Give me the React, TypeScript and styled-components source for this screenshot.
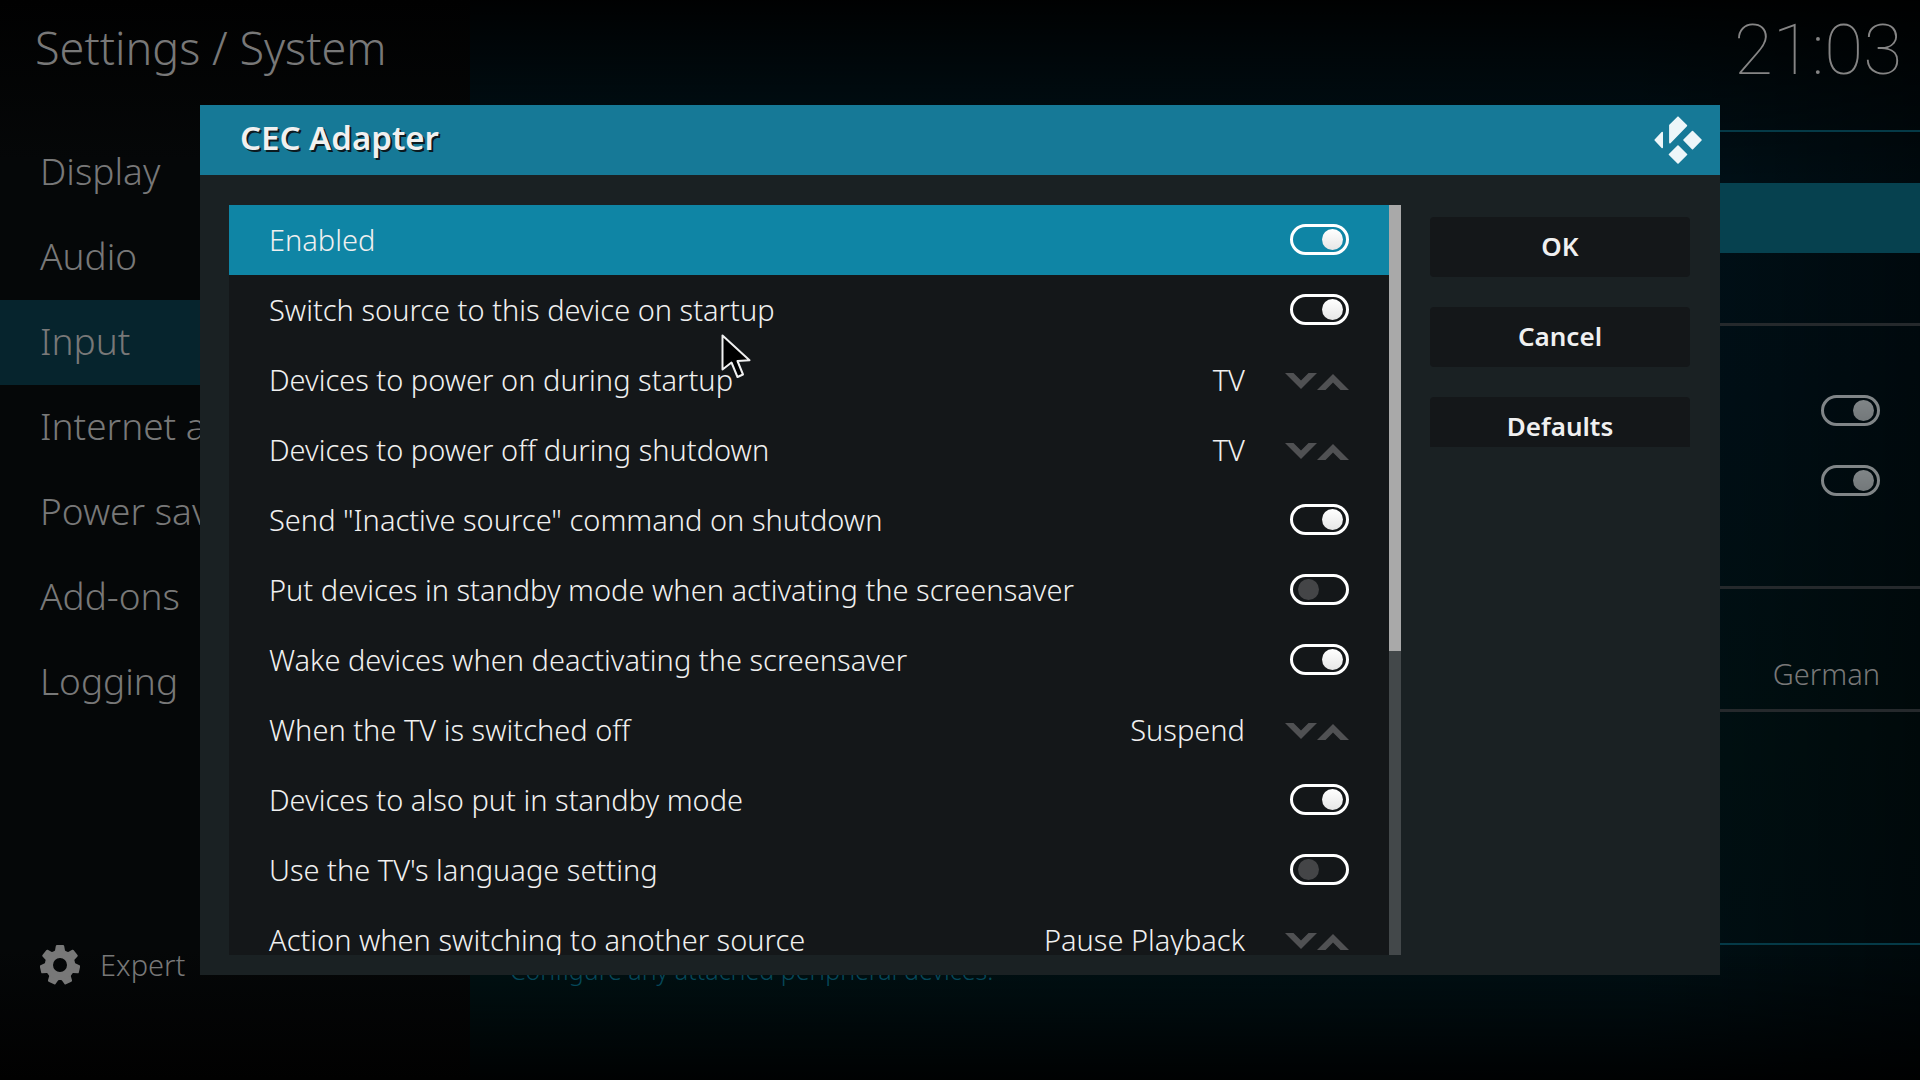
import React, { useState } from "react";
import styled, { createGlobalStyle, css } from "styled-components";

const GlobalStyle = createGlobalStyle`
  *, *::before, *::after { box-sizing: border-box; }
  html, body, #root { height: 100%; }
  body {
    margin: 0;
    overflow: hidden;
    background: #000;
    color: #f0f0f0;
    font-family: "Noto Sans", "Open Sans", sans-serif;
    font-weight: 300;
  }
  button { font: inherit; color: inherit; border: 0; padding: 0; background: none; cursor: inherit; }
  button:focus-visible, input:focus-visible { outline: 2px solid #12b2e7; outline-offset: 2px; }
`;

/* ---------- Window behind the dialog ---------- */

const Screen = styled.div`
  position: relative;
  display: flex;
  height: 100vh;
  color: #787878;
  background:
    linear-gradient(to bottom, rgba(0, 0, 0, 0.95) 0, rgba(0, 0, 0, 0) 180px, rgba(0, 0, 0, 0) calc(100% - 130px), rgba(0, 0, 0, 0.9) 100%),
    linear-gradient(to right, rgba(0, 0, 0, 0) 85%, rgba(0, 0, 0, 0.5) 100%),
    linear-gradient(170deg, #00141c 0%, #001119 50%, #001214 75%, #000f16 100%);
`;

const Sidebar = styled.nav`
  display: flex;
  flex-direction: column;
  flex: none;
  width: 470px;
  padding-bottom: 80px;
  background: linear-gradient(to bottom, #010101 0, #050708 160px, #050708 calc(100% - 130px), #010101 100%);
`;

const WindowTitle = styled.h1`
  height: 130px;
  margin: 0;
  padding: 17px 35px 0;
  font-size: 45px;
  line-height: 62px;
  font-weight: 300;
  white-space: nowrap;
`;

const Menu = styled.ul`
  flex: 1;
  margin: 0;
  padding: 0;
  list-style: none;
`;

const MenuLink = styled.a<{ $current: boolean }>`
  display: block;
  padding: 0 40px 4px;
  font-size: 37px;
  line-height: 81px;
  color: inherit;
  text-decoration: none;
  white-space: nowrap;
  background: ${(p) => (p.$current ? "#06242d" : "transparent")};
`;

const LevelButton = styled.button`
  display: flex;
  align-items: center;
  gap: 20px;
  height: 70px;
  padding: 0 40px;
  font-size: 29px;
`;

const Caption = styled.span`
  padding-bottom: 2px;
`;

const Content = styled.main`
  display: flex;
  flex-direction: column;
  flex: 1;
  min-width: 0;
`;

const ContentHeader = styled.header`
  display: flex;
  justify-content: flex-end;
  height: 130px;
  padding: 8px 18px 0;
`;

const Clock = styled.time`
  font-family: "Roboto Thin", Roboto, sans-serif;
  font-weight: 100;
  font-size: 71px;
  line-height: 84px;
  color: #858585;
`;

const Groups = styled.div`
  flex: 1;
  padding-top: 51px;
  border-top: 2px solid #053a47;
  border-bottom: 2px solid #053a47;
`;

const Group = styled.section<{ $heading: boolean }>`
  padding-top: ${(p) => (p.$heading ? "50px" : "0")};
  border-bottom: 3px solid #25292c;
`;

const GroupRow = styled.div<{ $focused?: boolean }>`
  display: flex;
  align-items: center;
  justify-content: flex-end;
  height: 70px;
  padding: 0 40px;
  font-size: 29px;
  background: ${(p) => (p.$focused ? "#06414f" : "transparent")};
`;

const Description = styled.p`
  height: 135px;
  margin: 0;
  padding: 7px 40px 0;
  font-size: 25px;
  line-height: 36px;
  color: #06485a;
`;

/* ---------- Dialog ---------- */

const Overlay = styled.div`
  position: absolute;
  inset: 0;
  display: flex;
  padding: 105px 200px;
`;

const Dialog = styled.section`
  display: flex;
  flex-direction: column;
  flex: 1;
  min-width: 0;
  color: #f0f0f0;
  background: #1a2123;
`;

const DialogHeader = styled.header`
  display: flex;
  align-items: center;
  justify-content: space-between;
  flex: none;
  height: 70px;
  padding: 0 18px 0 40px;
  background: #167997;
`;

const DialogTitle = styled.h2`
  height: 70px;
  margin: 0;
  font-size: 33px;
  line-height: 66px;
  font-weight: 600;
  text-shadow: 2px 2px 0 #0b1a20;
`;

const DialogBody = styled.div`
  display: flex;
  flex: 1;
  min-height: 0;
  padding: 30px 30px 20px 29px;
`;

const List = styled.div`
  flex: 1;
  min-width: 0;
  overflow: hidden;
  background: #141719;
`;

const Row = styled.div<{ $focused: boolean }>`
  display: flex;
  align-items: center;
  height: 70px;
  padding: 0 40px;
  font-size: 29px;
  line-height: 70px;
  white-space: nowrap;
  background: ${(p) => (p.$focused ? "#0f85a5" : "transparent")};
`;

const RowLabel = styled.label`
  flex: 1;
`;

const Value = styled.output`
  margin-right: 40px;
`;

const Spinner = styled.div`
  display: flex;
  margin-top: 2px;
  color: #505153;
`;

const SpinButton = styled.button`
  display: flex;
  width: 32px;
`;

const Toggle = styled.input.attrs({ type: "checkbox", role: "switch" })<{ $dim?: boolean }>`
  appearance: none;
  display: flex;
  align-items: center;
  flex: none;
  width: 59px;
  height: 31px;
  margin: 0 0 2px;
  padding: 0 3px;
  border: 3px solid #fff;
  border-radius: 16px;

  &::before {
    content: "";
    width: 21px;
    height: 21px;
    margin-left: 2px;
    border-radius: 50%;
    background: #444547;
  }

  &:checked::before {
    margin-left: 26px;
    background: linear-gradient(#fff, #e6e6e6);
  }

  ${(p) =>
    p.$dim &&
    css`
      opacity: 0.5;
    `}
`;

const ScrollTrack = styled.div`
  flex: none;
  width: 12px;
  margin-right: 29px;
  background: #43484a;
`;

const ScrollThumb = styled.div`
  background: #a9a9a9;
`;

const Actions = styled.div`
  display: flex;
  flex-direction: column;
  gap: 30px;
  flex: none;
  width: 260px;
  max-height: 230px;
  margin-top: 12px;
  overflow: hidden;
`;

const ActionButton = styled.button`
  flex: none;
  height: 60px;
  padding-bottom: 3px;
  border-radius: 4px;
  background: #141719;
  font-size: 26px;
  font-weight: 600;
`;

const Pointer = styled.svg`
  position: absolute;
  left: 720px;
  top: 332px;
  pointer-events: none;
`;

/* ---------- Drawings ---------- */

const DownArrow = () => (
  <svg width="32" height="17" viewBox="0 0 32 17" aria-hidden="true">
    <path d="M0 0h8.500L16 7.500 23.500 0H32L16 16z" fill="currentColor" />
  </svg>
);

const UpArrow = () => (
  <svg width="32" height="17" viewBox="0 0 32 17" aria-hidden="true">
    <path d="M0 17h8.500L16 9.500l7.500 7.500H32L16 1z" fill="currentColor" />
  </svg>
);

const KodiLogo = () => (
  <svg width="48" height="48" viewBox="0 0 48 48" role="img" aria-label="Kodi">
    <g fill="#edf6f9" stroke="#edf6f9" strokeWidth="1.6" strokeLinejoin="round">
      <path d="M24 1.2 32.4 9.6 15.9 26.6V9.3z" />
      <path d="M1.2 24 8.2 16.6v14.8z" />
      <path d="M38.5 15.5 47 24l-8.5 8.7L30 24z" />
      <path d="M24 30l8.5 8.5L24 47l-8.5-8.5z" />
    </g>
  </svg>
);

const GearIcon = () => {
  const teeth = Array.from({ length: 7 }, (_, i) => (i * 360) / 7);
  return (
    <svg width="40" height="40" viewBox="0 0 40 40" fill="currentColor" aria-hidden="true">
      {teeth.map((angle) => (
        <path
          key={angle}
          d="M17 0h6q1 0 1.200 1l.800 4.500 2 1.500v3H13V7l2-1.500L15.800 1q.200-1 1.200-1z"
          transform={`rotate(${angle} 20 20)`}
        />
      ))}
      <path
        fillRule="evenodd"
        d="M20 5.500a14.500 14.500 0 1 0 0 29 14.500 14.500 0 0 0 0-29zm0 7.500a7 7 0 1 1 0 14 7 7 0 0 1 0-14z"
      />
    </svg>
  );
};

/* ---------- Data ---------- */

const MENU = ["Display", "Audio", "Input", "Internet access", "Power saving", "Add-ons", "Logging"];

type Setting =
  | { kind: "toggle"; label: string; on: boolean }
  | { kind: "spin"; label: string; options: string[] };

const SETTINGS: Setting[] = [
  { kind: "toggle", label: "Enabled", on: true },
  { kind: "toggle", label: "Switch source to this device on startup", on: true },
  { kind: "spin", label: "Devices to power on during startup", options: ["TV"] },
  { kind: "spin", label: "Devices to power off during shutdown", options: ["TV"] },
  { kind: "toggle", label: 'Send "Inactive source" command on shutdown', on: true },
  { kind: "toggle", label: "Put devices in standby mode when activating the screensaver", on: false },
  { kind: "toggle", label: "Wake devices when deactivating the screensaver", on: true },
  { kind: "spin", label: "When the TV is switched off", options: ["Suspend"] },
  { kind: "toggle", label: "Devices to also put in standby mode", on: true },
  { kind: "toggle", label: "Use the TV's language setting", on: false },
  { kind: "spin", label: "Action when switching to another source", options: ["Pause Playback"] },
];

const THUMB_PERCENT = 59.5;

const ToggleRow = ({ id, label, on, focused }: { id: string; label: string; on: boolean; focused: boolean }) => {
  const [checked, setChecked] = useState(on);
  return (
    <Row $focused={focused}>
      <RowLabel htmlFor={id}>{label}</RowLabel>
      <Toggle id={id} checked={checked} onChange={() => setChecked(!checked)} />
    </Row>
  );
};

const SpinRow = ({ id, label, options }: { id: string; label: string; options: string[] }) => {
  const [index, setIndex] = useState(0);
  const step = (by: number) => setIndex((index + by + options.length) % options.length);
  return (
    <Row $focused={false}>
      <RowLabel htmlFor={id}>{label}</RowLabel>
      <Value id={id}>{options[index]}</Value>
      <Spinner>
        <SpinButton type="button" aria-label={`${label}: previous`} onClick={() => step(-1)}>
          <DownArrow />
        </SpinButton>
        <SpinButton type="button" aria-label={`${label}: next`} onClick={() => step(1)}>
          <UpArrow />
        </SpinButton>
      </Spinner>
    </Row>
  );
};

export default function App() {
  return (
    <>
      <GlobalStyle />
      <Screen>
        <Sidebar>
          <WindowTitle>Settings / System</WindowTitle>
          <Menu>
            {MENU.map((item) => (
              <li key={item}>
                <MenuLink href="#" $current={item === "Input"}>
                  {item}
                </MenuLink>
              </li>
            ))}
          </Menu>
          <LevelButton type="button">
            <GearIcon />
            <Caption>Expert</Caption>
          </LevelButton>
        </Sidebar>
        <Content>
          <ContentHeader>
            <Clock>21:03</Clock>
          </ContentHeader>
          <Groups>
            <Group $heading={false}>
              <GroupRow $focused />
              <GroupRow />
            </Group>
            <Group $heading>
              <GroupRow>
                <Toggle $dim defaultChecked aria-label="Enable mouse" />
              </GroupRow>
              <GroupRow>
                <Toggle $dim defaultChecked aria-label="Enable joystick" />
              </GroupRow>
              <GroupRow />
            </Group>
            <Group $heading>
              <GroupRow>
                <Caption>German</Caption>
              </GroupRow>
            </Group>
          </Groups>
          <Description>Configure any attached peripheral devices.</Description>
        </Content>

        <Overlay>
          <Dialog role="dialog" aria-labelledby="dialog-title">
            <DialogHeader>
              <DialogTitle id="dialog-title">CEC Adapter</DialogTitle>
              <KodiLogo />
            </DialogHeader>
            <DialogBody>
              <List>
                {SETTINGS.map((setting, i) =>
                  setting.kind === "toggle" ? (
                    <ToggleRow key={setting.label} id={`setting-${i}`} label={setting.label} on={setting.on} focused={i === 0} />
                  ) : (
                    <SpinRow key={setting.label} id={`setting-${i}`} label={setting.label} options={setting.options} />
                  )
                )}
              </List>
              <ScrollTrack>
                <ScrollThumb style={{ height: `${THUMB_PERCENT}%` }} />
              </ScrollTrack>
              <Actions>
                <ActionButton type="button">OK</ActionButton>
                <ActionButton type="button">Cancel</ActionButton>
                <ActionButton type="button">Defaults</ActionButton>
              </Actions>
            </DialogBody>
          </Dialog>
        </Overlay>

        <Pointer width="34" height="48" viewBox="0 0 34 48" aria-hidden="true">
          <path
            d="M2.500 3.500v34l9-7 6 14.500 5.500-2.500L17.500 29l12-.700z"
            fill="#000"
            stroke="#f0f0f0"
            strokeWidth="2"
            strokeLinejoin="round"
          />
        </Pointer>
      </Screen>
    </>
  );
}
